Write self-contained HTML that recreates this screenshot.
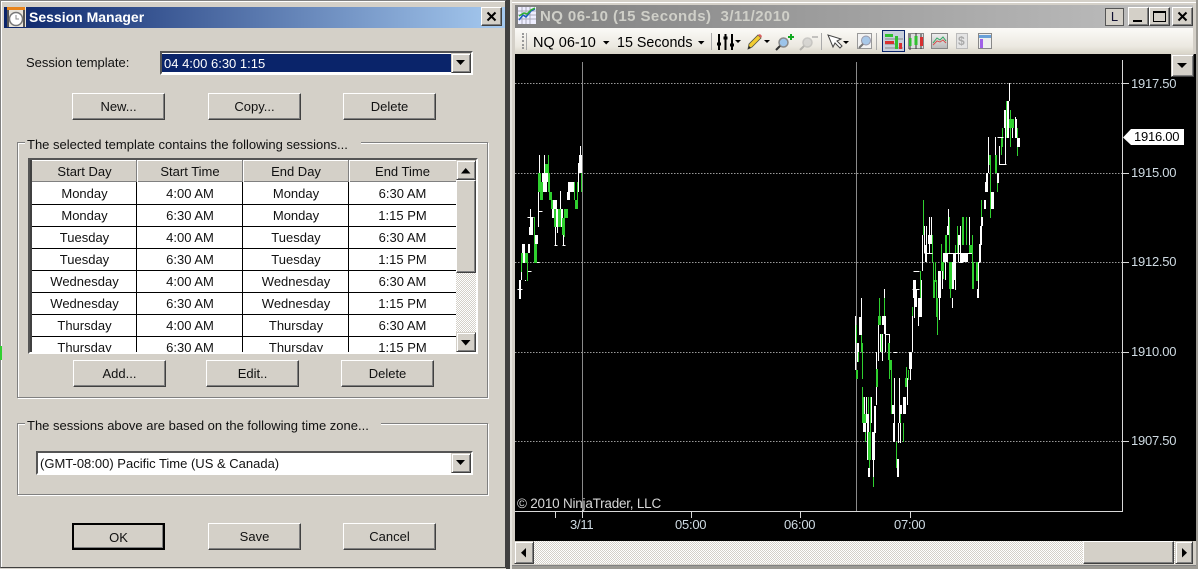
<!DOCTYPE html>
<html><head><meta charset="utf-8"><style>
html,body{margin:0;padding:0;background:#d4d0c8}
#r{position:relative;width:1198px;height:569px;overflow:hidden;background:#d4d0c8;font:13px "Liberation Sans",sans-serif;color:#111}
#r div{position:absolute;box-sizing:border-box}
.t{white-space:nowrap}
.b{background:#d4d0c8;border:1px solid;border-color:#fff #404040 #404040 #fff;box-shadow:inset -1px -1px 0 #808080;text-align:center;line-height:26px;height:27px;width:93px}
.g{border:1px solid #808080;box-shadow:1px 1px 0 #fff,inset 1px 1px 0 #fff}
.l{background:#d4d0c8;height:16px;line-height:18px;padding:0 2px}
.c{height:22px;line-height:24px;text-align:center}
.s{background:#d4d0c8;border:1px solid;border-color:#d4d0c8 #404040 #404040 #d4d0c8;box-shadow:inset 1px 1px 0 #fff,inset -1px -1px 0 #808080}
.a{color:#cfdbe3;font-size:13px;letter-spacing:-.25px;line-height:16px}
.w{background:#d4d0c8;border:1px solid;border-color:#fff #404040 #404040 #fff;box-shadow:inset -1px -1px 0 #808080}
</style></head><body><div id="r">

<!-- left dialog -->
<div style="left:0;top:0;width:506px;height:568px;border:1px solid #808080;border-right-color:#404040;border-bottom-color:#404040;box-shadow:inset 1px 1px 0 #fff"></div>
<div style="left:0;top:346px;width:2px;height:14px;background:#30d030"></div>
<div style="left:4px;top:7px;width:501px;height:21px;background:linear-gradient(90deg,#0a246a,#a6caf0)"></div>
<svg style="position:absolute;left:7px;top:7px" width="19" height="20" viewBox="0 0 19 20"><rect width="19" height="20" fill="#e8e4dc"/><rect width="18" height="3" fill="#e8841c"/><rect x="0" y="3" width="2" height="17" fill="#555"/><rect x="16" y="3" width="2" height="17" fill="#555"/><circle cx="9" cy="12" r="6.500" fill="#fff" stroke="#777" stroke-width="1.500"/><path d="M9 8v4h3" fill="none" stroke="#888"/></svg>
<div class="t" style="left:29px;top:8px;font-weight:bold;font-size:14px;line-height:18px;color:#fff">Session Manager</div>
<div class="w" style="left:481px;top:7px;width:21px;height:19px"></div>
<svg style="position:absolute;left:486px;top:11px" width="11" height="11"><path d="M1.500 1.500l8 8M9.500 1.500l-8 8" stroke="#000" stroke-width="2"/></svg>

<div class="t" style="left:26px;top:54px;line-height:18px">Session template:</div>
<div style="left:160px;top:51px;width:313px;height:24px;background:#fff;border:2px solid #555;border-right-color:#fff;border-bottom-color:#fff"></div>
<div class="t" style="left:162px;top:54px;width:289px;height:18px;background:#0a246a;color:#fff;line-height:19px;padding-left:2px">04 4:00 6:30 1:15</div>
<div class="s" style="left:451px;top:53px;width:20px;height:20px"></div>
<svg style="position:absolute;left:456px;top:60px" width="10" height="6"><path d="M0 0h9L4.500 5z" fill="#000"/></svg>

<div class="b t" style="left:72px;top:93px">New...</div>
<div class="b t" style="left:208px;top:93px">Copy...</div>
<div class="b t" style="left:343px;top:93px">Delete</div>

<div class="g" style="left:17px;top:142px;width:471px;height:256px"></div>
<div class="l t" style="left:25px;top:136px;width:336px">The selected template contains the following sessions...</div>

<!-- list -->
<div style="left:28px;top:158px;width:450px;height:196px;border:2px solid #555;border-right-color:#fff;border-bottom-color:#fff;background:#d4d0c8"></div>
<div style="left:30px;top:160px;width:2px;height:192px;background:#404040"></div>
<div style="left:32px;top:160px;width:424px;height:192px;overflow:hidden;background:#fff">
 <div style="left:0;top:0;width:424px;height:22px;background:#d4d0c8;border-top:1px solid #fff;border-bottom:1px solid #808080"></div>
 <div class="c t" style="left:0;top:0;width:105px">Start Day</div><div class="c t" style="left:105px;top:0;width:106px">Start Time</div><div class="c t" style="left:211px;top:0;width:106px">End Day</div><div class="c t" style="left:317px;top:0;width:107px">End Time</div>
 <div style="left:104px;top:0;width:2px;height:22px;background:linear-gradient(90deg,#808080 50%,#fff 50%)"></div>
 <div style="left:210px;top:0;width:2px;height:22px;background:linear-gradient(90deg,#808080 50%,#fff 50%)"></div>
 <div style="left:316px;top:0;width:2px;height:22px;background:linear-gradient(90deg,#808080 50%,#fff 50%)"></div>
 <div style="left:104px;top:22px;width:1px;height:170px;background:#000"></div>
 <div style="left:210px;top:22px;width:1px;height:170px;background:#000"></div>
 <div style="left:316px;top:22px;width:1px;height:170px;background:#000"></div>
 <div style="left:0;top:44px;width:424px;height:1px;background:#000"></div>
 <div style="left:0;top:66px;width:424px;height:1px;background:#000"></div>
 <div style="left:0;top:88px;width:424px;height:1px;background:#000"></div>
 <div style="left:0;top:110px;width:424px;height:1px;background:#000"></div>
 <div style="left:0;top:132px;width:424px;height:1px;background:#000"></div>
 <div style="left:0;top:154px;width:424px;height:1px;background:#000"></div>
 <div style="left:0;top:176px;width:424px;height:1px;background:#000"></div>
 <div class="c t" style="left:0;top:22px;width:105px">Monday</div><div class="c t" style="left:105px;top:22px;width:106px">4:00 AM</div><div class="c t" style="left:211px;top:22px;width:106px">Monday</div><div class="c t" style="left:317px;top:22px;width:107px">6:30 AM</div>
 <div class="c t" style="left:0;top:44px;width:105px">Monday</div><div class="c t" style="left:105px;top:44px;width:106px">6:30 AM</div><div class="c t" style="left:211px;top:44px;width:106px">Monday</div><div class="c t" style="left:317px;top:44px;width:107px">1:15 PM</div>
 <div class="c t" style="left:0;top:66px;width:105px">Tuesday</div><div class="c t" style="left:105px;top:66px;width:106px">4:00 AM</div><div class="c t" style="left:211px;top:66px;width:106px">Tuesday</div><div class="c t" style="left:317px;top:66px;width:107px">6:30 AM</div>
 <div class="c t" style="left:0;top:88px;width:105px">Tuesday</div><div class="c t" style="left:105px;top:88px;width:106px">6:30 AM</div><div class="c t" style="left:211px;top:88px;width:106px">Tuesday</div><div class="c t" style="left:317px;top:88px;width:107px">1:15 PM</div>
 <div class="c t" style="left:0;top:110px;width:105px">Wednesday</div><div class="c t" style="left:105px;top:110px;width:106px">4:00 AM</div><div class="c t" style="left:211px;top:110px;width:106px">Wednesday</div><div class="c t" style="left:317px;top:110px;width:107px">6:30 AM</div>
 <div class="c t" style="left:0;top:132px;width:105px">Wednesday</div><div class="c t" style="left:105px;top:132px;width:106px">6:30 AM</div><div class="c t" style="left:211px;top:132px;width:106px">Wednesday</div><div class="c t" style="left:317px;top:132px;width:107px">1:15 PM</div>
 <div class="c t" style="left:0;top:154px;width:105px">Thursday</div><div class="c t" style="left:105px;top:154px;width:106px">4:00 AM</div><div class="c t" style="left:211px;top:154px;width:106px">Thursday</div><div class="c t" style="left:317px;top:154px;width:107px">6:30 AM</div>
 <div class="c t" style="left:0;top:176px;width:105px">Thursday</div><div class="c t" style="left:105px;top:176px;width:106px">6:30 AM</div><div class="c t" style="left:211px;top:176px;width:106px">Thursday</div><div class="c t" style="left:317px;top:176px;width:107px">1:15 PM</div>
</div>
<!-- list scrollbar -->
<div style="left:456px;top:160px;width:20px;height:192px;background:repeating-conic-gradient(#d4d0c8 0 25%,#fff 0 50%) 0 0/2px 2px"></div>
<div class="s" style="left:456px;top:160px;width:20px;height:20px"></div>
<svg style="position:absolute;left:461px;top:168px" width="10" height="6"><path d="M0 5.500h9.500L4.700 0z" fill="#000"/></svg>
<div class="w" style="left:456px;top:180px;width:20px;height:93px"></div>
<div class="s" style="left:456px;top:332px;width:20px;height:20px"></div>
<svg style="position:absolute;left:461px;top:340px" width="10" height="6"><path d="M0 0h9.500L4.700 5.500z" fill="#000"/></svg>

<div class="b t" style="left:73px;top:360px">Add...</div>
<div class="b t" style="left:206px;top:360px">Edit..</div>
<div class="b t" style="left:341px;top:360px">Delete</div>

<div class="g" style="left:17px;top:423px;width:471px;height:72px"></div>
<div class="l t" style="left:25px;top:417px;width:356px">The sessions above are based on the following time zone...</div>
<div class="t" style="left:36px;top:451px;width:437px;height:24px;background:#fff;border:2px solid #555;border-right-color:#fff;border-bottom-color:#fff;line-height:21px;padding-left:2px">(GMT-08:00) Pacific Time (US &amp; Canada)</div>
<div class="s" style="left:451px;top:453px;width:20px;height:20px"></div>
<svg style="position:absolute;left:456px;top:460px" width="10" height="6"><path d="M0 0h9L4.500 5z" fill="#000"/></svg>

<div class="b t" style="left:72px;top:523px;border:2px solid #000;line-height:25px">OK</div>
<div class="b t" style="left:208px;top:523px">Save</div>
<div class="b t" style="left:343px;top:523px">Cancel</div>

<!-- separator -->
<div style="left:506px;top:0;width:4px;height:569px;background:#404040"></div>
<div style="left:510px;top:0;width:2px;height:569px;background:#e6e4de"></div>

<!-- right window -->
<div style="left:512px;top:2px;width:686px;height:1px;background:#fff"></div>
<div style="left:515px;top:5px;width:678px;height:23px;background:linear-gradient(90deg,#808080,#c0c0c0)"></div>
<svg style="position:absolute;left:518px;top:7px" width="18" height="17" viewBox="0 0 18 17"><rect width="18" height="17" fill="#eef"/><path d="M0 4h18M0 8h18M0 12h18M4 0v17M8 0v17M12 0v17" stroke="#aab"/><path d="M1 13l4-5 3 2 5-6 4-2" fill="none" stroke="#1c5cc0" stroke-width="1.500"/><path d="M1 9l5-3 3 1 4-4 4-2" fill="none" stroke="#30b030" stroke-width="1.500"/></svg>
<div class="t" style="left:540px;top:8px;font:bold 15px/17px 'Liberation Sans',sans-serif;letter-spacing:.42px;color:#cfcfc8">NQ 06-10 (15 Seconds)&nbsp; 3/11/2010</div>
<div style="left:1105px;top:8px;width:19px;height:18px;background:#d4d0c8;border:1px solid #555;text-align:center;line-height:15px;font-size:13px;color:#113">L</div>
<div class="w" style="left:1128px;top:7px;width:21px;height:19px"></div>
<div style="left:1133px;top:20px;width:9px;height:2px;background:#000"></div>
<div class="w" style="left:1149px;top:7px;width:21px;height:19px"></div>
<div style="left:1153px;top:11px;width:13px;height:11px;border:1px solid #000;border-top-width:2px"></div>
<div class="w" style="left:1172px;top:7px;width:21px;height:19px"></div>
<svg style="position:absolute;left:1177px;top:11px" width="11" height="11"><path d="M1.500 1.500l8 8M9.500 1.500l-8 8" stroke="#000" stroke-width="2"/></svg>

<div style="left:515px;top:28px;width:678px;height:26px;background:linear-gradient(#fbfaf7,#ece9e1 70%,#d8d4c8)"></div>
<div style="left:522px;top:33px;width:1px;height:16px;border-left:2px dotted #999"></div>
<div style="left:526px;top:33px;width:1px;height:17px;background:#aaa"></div>
<div class="t" style="left:533px;top:33px;font-size:14.500px;line-height:20px;color:#000">NQ 06-10</div>
<svg style="position:absolute;left:603px;top:41px" width="7" height="4"><path d="M0 0h6.500L3.200 3.500z"/></svg>
<div class="t" style="left:617px;top:33px;font-size:14.300px;line-height:20px;color:#000">15 Seconds</div>
<svg style="position:absolute;left:698px;top:41px" width="7" height="4"><path d="M0 0h6.500L3.200 3.500z"/></svg>
<div style="left:711px;top:33px;width:1px;height:17px;background:#aaa"></div>
<svg style="position:absolute;left:716px;top:33px" width="26" height="18"><path d="M3 1v16M9.500 1v16M16 1v16" stroke="#000" stroke-width="2"/><path d="M1 11h4M7.500 5h4M14 12h4" stroke="#000" stroke-width="3"/><path d="M19 7h6L22 10z"/></svg>
<svg style="position:absolute;left:745px;top:33px" width="30" height="18"><path d="M3 16l1-5L13 2l3 3-9 9z" fill="#f2cc30" stroke="#554" stroke-width=".8"/><path d="M13 2l3 3 1-2-2-2z" fill="#d86060"/><path d="M3 16l1-3 2 2z" fill="#222"/><path d="M19 7h6L22 10z"/></svg>
<svg style="position:absolute;left:774px;top:33px" width="20" height="18"><circle cx="9.500" cy="9.500" r="4.500" fill="#9cc4ea" stroke="#888" stroke-width="1.500"/><path d="M6 13l-4 4" stroke="#333" stroke-width="2"/><path d="M14 4h6M17 1v6" stroke="#10a820" stroke-width="2"/></svg>
<svg style="position:absolute;left:798px;top:33px" width="20" height="18" opacity=".45"><circle cx="9.500" cy="9.500" r="4.500" fill="#bbb" stroke="#999" stroke-width="1.500"/><path d="M6 13l-4 4" stroke="#777" stroke-width="2"/><path d="M14 4h6" stroke="#888" stroke-width="2"/></svg>
<div style="left:821px;top:33px;width:1px;height:17px;background:#aaa"></div>
<svg style="position:absolute;left:827px;top:34px" width="24" height="16"><path d="M1 1l5 12 2-4 5 5 2-2-5-5 4-2z" fill="#fff" stroke="#444"/><path d="M16 7h6L19 10z"/></svg>
<div style="left:857px;top:33px;width:15px;height:16px;background:#f2f2f2;border:1px solid #999"></div>
<svg style="position:absolute;left:857px;top:33px" width="16" height="17"><circle cx="9" cy="7.500" r="4.500" fill="#a8c8e8" stroke="#99a"/><path d="M6 11l-4 4" stroke="#777" stroke-width="2"/></svg>
<div style="left:876px;top:33px;width:1px;height:17px;background:#aaa"></div>
<div style="left:882px;top:30px;width:23px;height:22px;background:#c8cfdc;border:1px solid #0a246a"></div>
<svg style="position:absolute;left:883px;top:31px" width="21" height="20"><path d="M2 8h18M2 13h10M2 17h18" stroke="#888"/><rect x="2" y="3" width="8" height="3" fill="#30c030"/><rect x="2" y="10" width="9" height="3" fill="#d83030"/><rect x="12" y="5" width="3" height="13" fill="#30c030"/><rect x="16" y="12" width="3" height="6" fill="#d83030"/></svg>
<div style="left:908px;top:33px;width:16px;height:16px;background:#ddd;border:1px solid #888"></div>
<svg style="position:absolute;left:908px;top:32px" width="16" height="18"><path d="M2 2v16M8 1v16M13 2v15" stroke="#333"/><rect x="1" y="6" width="2.500" height="8" fill="#30c030"/><rect x="6.500" y="4" width="3" height="9" fill="#30c030"/><rect x="12" y="5" width="3" height="9" fill="#d83030"/></svg>
<div style="left:931px;top:33px;width:17px;height:16px;background:linear-gradient(#eee,#bbb);border:1px solid #888"></div>
<svg style="position:absolute;left:931px;top:33px" width="17" height="16"><path d="M2 10l4-5 3 2 3-3 3 4" fill="none" stroke="#30a860"/><path d="M2 12l4-4 3 1 3-2 3 3" fill="none" stroke="#d85050"/></svg>
<div style="left:956px;top:33px;width:12px;height:16px;background:#e4e4e4;border:1px solid #bbb"></div>
<div class="t" style="left:958px;top:34px;font:bold 12px/14px 'Liberation Sans',sans-serif;color:#aaa">$</div>
<div style="left:978px;top:33px;width:14px;height:16px;background:#eee;border:1px solid #888"></div>
<div style="left:979px;top:35px;width:12px;height:3px;background:#6aa0d8"></div>
<div style="left:980px;top:39px;width:3px;height:9px;background:#a060e8"></div>

<!-- chart -->
<div style="left:515px;top:54px;width:681px;height:487px;background:#000"></div>
<div class="s" style="left:1171px;top:54px;width:23px;height:23px"></div>
<svg style="position:absolute;left:1177px;top:63px" width="11" height="6"><path d="M0 0h10L5 5z"/></svg>

<svg style="position:absolute;left:515px;top:54px" width="681" height="487" viewBox="515 54 681 487" shape-rendering="crispEdges">
<path d="M515 83.500h607M515 173.500h607M515 262.500h607M515 352.500h607M515 441.500h607" stroke="#9a9a9a" stroke-dasharray="1.500 1.500"/>
<path d="M582.500 62v449M856.500 62v449" stroke="#8a8a8a"/>
<path d="M1122.500 60v451.500H515" stroke="#d8d8d8" fill="none"/>
<path d="M1123 83.500h6M1123 173.500h6M1123 262.500h6M1123 352.500h6M1123 441.500h6M555.500 512v6M582.500 512v6M691.500 512v6M800.500 512v6M910.500 512v6" stroke="#d8d8d8"/>
<!-- green wicks -->
<path fill="none" stroke="#2fd02f" d="M521.500 263v9M534.500 217v27M548.500 155v20M551.500 192v9M555.500 200v9M564.500 227v10M574.500 182v18M577.500 182v20M581.500 163v29M856.500 325v18M861.500 307v36M862.500 352v27M862.500 387v10M865.500 432v10M868.500 397v35M869.500 450v18M873.500 459v28M879.500 298v18M884.500 298v18M889.500 370v9M891.500 370v44M896.500 442v26M903.500 423v19M906.500 367v20M908.500 370v10M912.500 307v20M920.500 271v27M923.500 200v35M932.500 235v27M933.500 262v18M937.500 317v18M941.500 244v18M943.500 271v8M949.500 217v36M950.500 289v9M957.500 226v27M972.500 235v27M981.500 200v17M990.500 165v53M997.500 183v9M1001.500 137v18M1002.500 128v19M1006.500 101v37M1010.500 110v37M1017.500 128v28M863.500 397v35M870.500 397v35M900.500 405v18M935.500 262v20M955.500 245v18M966.500 217v28"/>
<!-- white wicks -->
<path fill="none" stroke="#fff" d="M521.500 272v8M525.500 280v1M530.500 209v8M538.500 192v35M539.500 155v37M544.500 155v18M555.500 227v18M560.500 191v18M563.500 227v18M578.500 163v29M580.500 146v9M855.500 316v54M861.500 298v19M866.500 397v26M871.500 397v26M873.500 459v18M875.500 406v27M876.500 352v53M878.500 352v9M878.500 325v27M882.500 352v9M884.500 289v9M889.500 334v26M898.500 423v20M899.500 378v45M912.500 316v36M916.500 289v18M918.500 307v19M921.500 280v37M922.500 235v36M924.500 226v27M925.500 245v17M931.500 217v18M942.500 262v27M948.500 209v17M952.500 298v10M958.500 244v18M969.500 217v36M988.500 137v36M999.500 146v19M1005.500 128v37M1009.500 83v18M1015.500 117v21M517.500 289.500h5M527.500 271.500h4M527.500 217.500h6M534.500 262.500h5M538.500 211.500h4M554.500 245.500h3M562.500 245.500h3M893.500 352.500h4M912.500 289.500h7M924.500 253.500h8M958.500 262.500h5M913.500 271.500h6M999.500 164.500h7M997.500 137.500h6M864.500 397v26M867.500 414v46M874.500 406v54M885.500 316v36M886 334.500h4M894.500 378v64M900.500 423v20M901.500 405v9M907.500 378v27M910.500 352v28M915.500 280v27M914.500 298v20M926.500 226v36M929.500 217v36M939.500 280v40M945.500 262v18M955.500 253v37M960.500 226v36M943 253.500h29M977 262.500h3M993.500 192v17M1012.500 119v19M995.500 137v36M544.500 173v19M557.500 227v6"/>
<!-- white bodies -->
<path fill="#fff" d="M519 280h2v19h-2zM522 244h3v9h-3zM523 253h2v10h-2zM528 244h2v9h-2zM529 227h4v8h-4zM530 217h3v10h-3zM535 235h3v9h-3zM542 173h6v9h-6zM543 182h4v10h-4zM552 209h3v9h-3zM552 200h5v9h-5zM556 209h2v18h-2zM561 209h2v18h-2zM567 192h3v8h-3zM568 182h6v10h-6zM579 155h3v18h-3zM857 343h2v19h-2zM859 317h3v18h-3zM863 423h3v9h-3zM867 414h2v18h-2zM872 432h3v28h-3zM868 468h2v9h-2zM884 316h2v18h-2zM882 316h2v9h-2zM880 334h3v18h-3zM886 334h3v1h-3zM892 405h3v9h-3zM893 423h2v19h-2zM897 459h2v18h-2zM899 405h3v9h-3zM903 397h3v17h-3zM906 378h2v9h-2zM909 352h3v17h-3zM913 280h2v18h-2zM918 298h3v19h-3zM928 235h4v9h-4zM938 271h3v27h-3zM943 253h5v9h-5zM947 226h2v9h-2zM952 262h2v27h-2zM953 253h3v27h-3zM958 235h3v10h-3zM960 253h4v9h-4zM964 253h4v9h-4zM977 289h2v9h-2zM978 262h1v36h-1zM979 244h2v18h-2zM980 226h2v19h-2zM981 217h2v9h-2zM984 200h2v9h-2zM985 182h3v10h-3zM986 173h2v9h-2zM991 192h2v17h-2zM997 173h2v10h-2zM1004 110h2v18h-2zM1007 101h2v37h-2zM1016 119h1v19h-1zM1017 138h3v9h-3z"/>
<!-- green bodies -->
<path fill="#2fd02f" d="M521 253h2v10h-2zM525 253h2v10h-2zM527 253h1v28h-1zM534 244h3v19h-3zM538 173h3v19h-3zM540 182h3v18h-3zM545 164h3v9h-3zM548 173h2v19h-2zM549 192h3v8h-3zM551 200h2v9h-2zM554 209h2v18h-2zM558 209h2v18h-2zM560 209h1v18h-1zM562 218h3v17h-3zM564 209h4v9h-4zM575 200h3v9h-3zM856 370h2v9h-2zM858 352h1v10h-1zM861 343h2v9h-2zM862 397h2v26h-2zM863 414h3v9h-3zM868 432h3v28h-3zM876 369h2v18h-2zM878 316h3v9h-3zM881 334h1v18h-1zM888 343h2v17h-2zM889 360h3v10h-3zM897 459h-1v9h1zM905 378h2v9h-2zM933 280h2v18h-2zM936 280h1v37h-1zM937 298h1v19h-1zM941 262h3v9h-3zM945 235h2v18h-2zM949 262h3v27h-3zM962 217h2v28h-2zM969 245h3v8h-3zM972 262h2v27h-2zM976 262h2v19h-2zM989 155h2v10h-2zM995 155h2v18h-2zM1009 119h5v9h-5z"/>
</svg>

<div class="t" style="left:517px;top:495px;color:#d8d8d8;font-size:13.500px;line-height:17px;letter-spacing:-.22px">© 2010 NinjaTrader, LLC</div>
<div class="t a" style="left:570px;top:517px">3/11</div>
<div class="t a" style="left:675px;top:517px">05:00</div>
<div class="t a" style="left:784px;top:517px">06:00</div>
<div class="t a" style="left:894px;top:517px">07:00</div>
<div class="t a" style="left:1131px;top:76px">1917.50</div>
<div class="t a" style="left:1131px;top:165px">1915.00</div>
<div class="t a" style="left:1131px;top:254px">1912.50</div>
<div class="t a" style="left:1131px;top:344px">1910.00</div>
<div class="t a" style="left:1131px;top:433px">1907.50</div>
<svg style="position:absolute;left:1123px;top:129px" width="62" height="17"><path d="M0 8.500L8 0h53v16H8z" fill="#fff"/></svg>
<div class="t" style="left:1134px;top:129px;color:#000;font-size:13px;line-height:16px;letter-spacing:-.25px">1916.00</div>

<!-- bottom scrollbar -->
<div style="left:514px;top:541px;width:679px;height:23px;background:repeating-conic-gradient(#d4d0c8 0 25%,#fff 0 50%) 0 0/2px 2px"></div>
<div class="s" style="left:514px;top:541px;width:20px;height:23px"></div>
<svg style="position:absolute;left:521px;top:548px" width="6" height="10"><path d="M5 0v9.500L0 4.700z"/></svg>
<div class="w" style="left:1083px;top:541px;width:91px;height:23px"></div>
<div class="s" style="left:1175px;top:541px;width:18px;height:23px"></div>
<svg style="position:absolute;left:1182px;top:548px" width="6" height="10"><path d="M0 0v9.500L5 4.700z"/></svg>
<div style="left:512px;top:565px;width:686px;height:1px;background:#808080"></div>
<div style="left:512px;top:566px;width:686px;height:3px;background:#9c9a94"></div>
<div style="left:1196px;top:0;width:2px;height:569px;background:#9c9a94"></div>
</div></body></html>
